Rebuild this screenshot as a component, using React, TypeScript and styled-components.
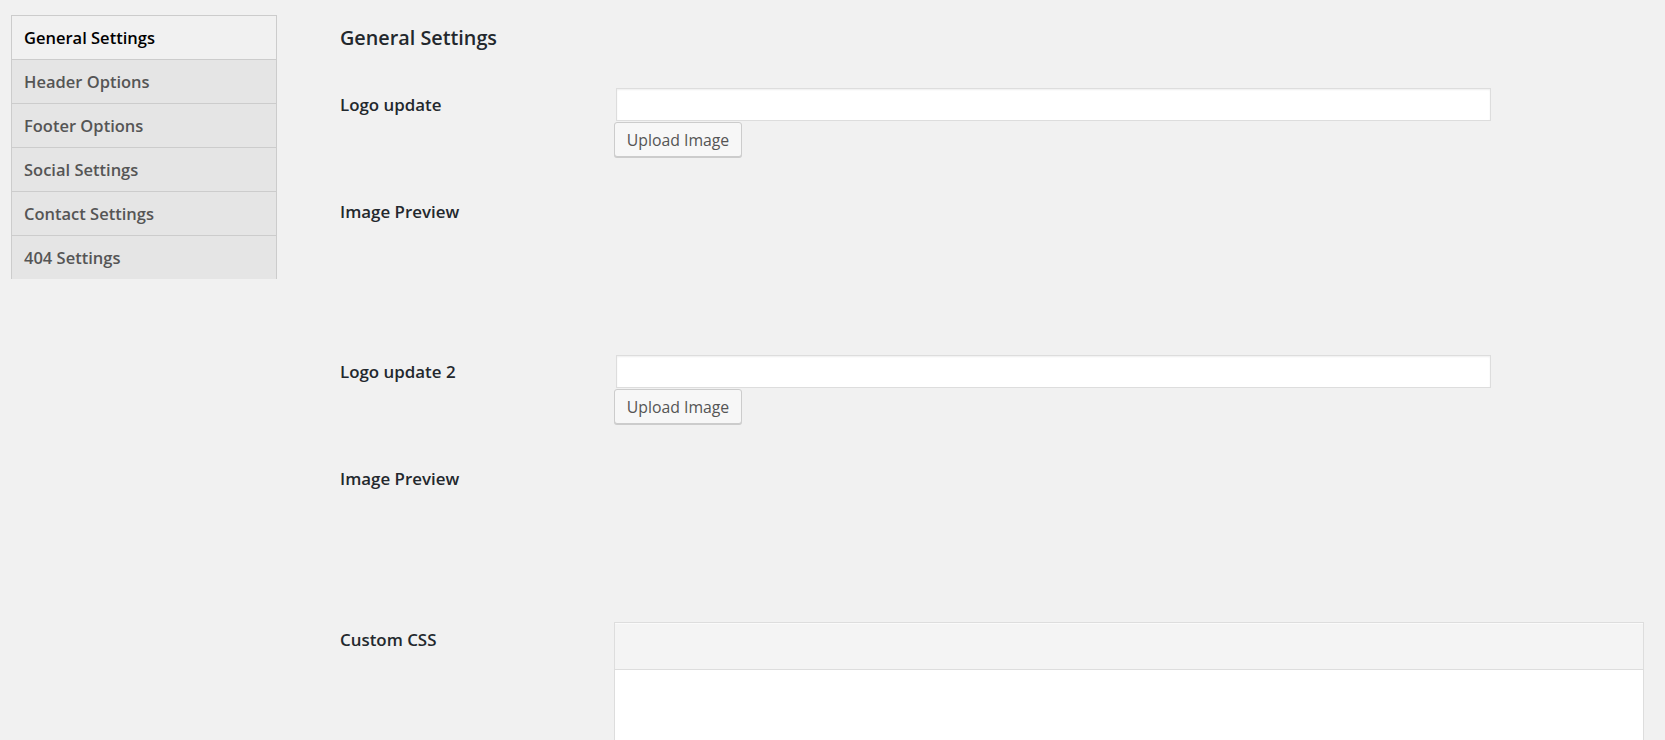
import React from "react";
import styled, { createGlobalStyle } from "styled-components";

const GlobalStyle = createGlobalStyle`
  html, body {
    margin: 0;
    padding: 0;
    background: #f1f1f1;
    font-family: "Open Sans", "Noto Sans", "Liberation Sans", sans-serif;
    color: #23282d;
  }
  * { box-sizing: border-box; }
`;

const Page = styled.div`
  display: flex;
  align-items: flex-start;
  padding: 15px 21px 0 11px;
`;

const Sidebar = styled.ul`
  list-style: none;
  margin: 0;
  padding: 0;
  width: 266px;
  flex: none;
  border: 1px solid #ccc;
  border-bottom: none;
`;

const Tab = styled.li<{ $active?: boolean }>`
  display: flex;
  align-items: center;
  height: 44px;
  padding: 0 0 0 12px;
  border-bottom: 1px solid #ccc;
  background: ${(p) => (p.$active ? "#f1f1f1" : "#e5e5e5")};
  color: ${(p) => (p.$active ? "#000" : "#555")};
  font-size: 16.5px;
  font-weight: 600;
  cursor: pointer;
  &:last-child { border-bottom: none; height: 43px; }
`;

const Main = styled.main`
  flex: 1;
  margin-left: 63px;
  padding-top: 9px;
`;

const Heading = styled.h2`
  margin: 0;
  font-size: 19.8px;
  line-height: 27px;
  font-weight: 600;
  color: #23282d;
`;

const Row = styled.div<{ $top: number }>`
  display: grid;
  grid-template-columns: 274px 1fr;
  margin-top: ${(p) => p.$top}px;
`;

const Label = styled.div<{ $pad: number }>`
  padding-top: ${(p) => p.$pad}px;
  font-size: 16.9px;
  line-height: 23px;
  font-weight: 600;
  color: #23282d;
`;

const Field = styled.div`
  display: flex;
  flex-direction: column;
  align-items: flex-start;
`;

const TextInput = styled.input`
  width: 875px;
  height: 33px;
  margin: 0 0 1px 2px;
  border: 1px solid #ddd;
  background: #fff;
  box-shadow: inset 0 1px 2px rgba(0, 0, 0, 0.07);
  outline: none;
  font: inherit;
`;

const Button = styled.button`
  height: 35px;
  width: 128px;
  padding: 0;
  border: 1px solid #ccc;
  border-radius: 3px;
  background: #f7f7f7;
  box-shadow: 0 1px 0 #ccc;
  color: #555;
  font-family: inherit;
  font-size: 15.8px;
  font-weight: 400;
  cursor: pointer;
`;

const PreviewArea = styled.div`
  height: 157px;
`;

const Editor = styled.div`
  border: 1px solid #ddd;
  background: #fff;
`;

const EditorBar = styled.div`
  height: 47px;
  background: #f4f4f4;
  border-bottom: 1px solid #ddd;
  box-shadow: inset 0 1px 0 #fafafa;
`;

const EditorBody = styled.div`
  height: 300px;
`;

const tabs = [
  "General Settings",
  "Header Options",
  "Footer Options",
  "Social Settings",
  "Contact Settings",
  "404 Settings",
];

const UploadRow: React.FC<{ label: string; top: number }> = ({ label, top }) => (
  <Row $top={top}>
    <Label $pad={5}>{label}</Label>
    <Field>
      <TextInput type="text" />
      <Button type="button">Upload Image</Button>
    </Field>
  </Row>
);

const PreviewRow: React.FC = () => (
  <Row $top={41}>
    <Label $pad={2}>Image Preview</Label>
    <PreviewArea />
  </Row>
);

export default function App() {
  return (
    <>
      <GlobalStyle />
      <Page>
        <Sidebar>
          {tabs.map((t, i) => (
            <Tab key={t} $active={i === 0}>
              {t}
            </Tab>
          ))}
        </Sidebar>
        <Main>
          <Heading>General Settings</Heading>
          <UploadRow label="Logo update" top={37} />
          <PreviewRow />
          <UploadRow label="Logo update 2" top={0} />
          <PreviewRow />
          <Row $top={0}>
            <Label $pad={6}>Custom CSS</Label>
            <Editor>
              <EditorBar />
              <EditorBody />
            </Editor>
          </Row>
        </Main>
      </Page>
    </>
  );
}
